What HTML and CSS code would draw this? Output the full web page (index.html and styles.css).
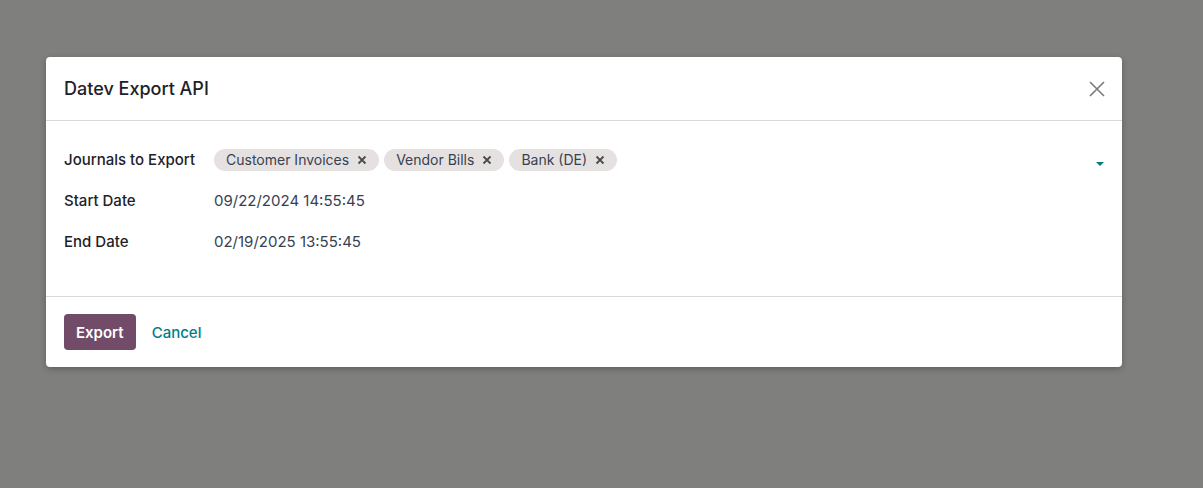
FILE: index.html
```html
<!DOCTYPE html>
<html>
<head>
<meta charset="utf-8">
<link rel="stylesheet" href="styles.css">
</head>
<body>
<div class="backdrop">
  <div class="modal">
    <div class="modal-header">
      <h4 class="modal-title">Datev Export API</h4>
      <button class="close" aria-label="Close">
        <svg width="18" height="18" viewBox="0 0 18 18"><path d="M2 2L16 16M16 2L2 16" stroke="#7a7a7a" stroke-width="1.6" fill="none"/></svg>
      </button>
    </div>
    <div class="modal-body">
      <div class="row">
        <div class="label">Journals to Export</div>
        <div class="value tags">
          <span class="tag">Customer Invoices <svg class="x" width="10" height="10" viewBox="0 0 10 10"><path d="M1.5 1.5L8.5 8.5M8.5 1.5L1.5 8.5" stroke="#4b4b4b" stroke-width="1.8" fill="none"/></svg></span>
          <span class="tag">Vendor Bills <svg class="x" width="10" height="10" viewBox="0 0 10 10"><path d="M1.5 1.5L8.5 8.5M8.5 1.5L1.5 8.5" stroke="#4b4b4b" stroke-width="1.8" fill="none"/></svg></span>
          <span class="tag">Bank (DE) <svg class="x" width="10" height="10" viewBox="0 0 10 10"><path d="M1.5 1.5L8.5 8.5M8.5 1.5L1.5 8.5" stroke="#4b4b4b" stroke-width="1.8" fill="none"/></svg></span>
          <span class="caret"></span>
        </div>
      </div>
      <div class="row">
        <div class="label">Start Date</div>
        <div class="value">09/22/2024 14:55:45</div>
      </div>
      <div class="row">
        <div class="label">End Date</div>
        <div class="value">02/19/2025 13:55:45</div>
      </div>
    </div>
    <div class="modal-footer">
      <button class="btn-primary">Export</button>
      <button class="btn-link">Cancel</button>
    </div>
  </div>
</div>
</body>
</html>
```

FILE: styles.css
```css
html, body {
  margin: 0;
  padding: 0;
  height: 100%;
}
body {
  background: #7f807e;
  font-family: Inter, "Noto Sans", sans-serif;
  color: #1f2129;
}
.backdrop {
  padding: 57px 81px 0 46px;
}
.modal {
  background: #fff;
  border-radius: 4px;
  box-shadow: 0 2px 6px rgba(0,0,0,0.25);
  width: 1076px;
}
.modal-header {
  height: 63px;
  border-bottom: 1px solid #d8dadd;
  display: flex;
  align-items: center;
  justify-content: space-between;
  padding: 0 16px 0 18px;
}
.modal-title {
  margin: 0;
  font-size: 18px;
  font-weight: 500;
  color: #1f2129;
}
.close {
  background: none;
  border: 0;
  padding: 0;
  display: flex;
  cursor: pointer;
}
.modal-body {
  padding: 18px 18px 34px 18px;
}
.row {
  display: flex;
  align-items: center;
  height: 41px;
}
.label {
  width: 150px;
  font-size: 15px;
  font-weight: 500;
  color: #1f2129;
}
.value {
  font-size: 15px;
  color: #374151;
  flex: 1;
}
.tags {
  display: flex;
  align-items: center;
  gap: 5px;
  position: relative;
}
.tag {
  display: inline-flex;
  align-items: center;
  height: 22px;
  padding: 0 12px;
  border-radius: 11px;
  background: #e6e1e1;
  color: #374151;
  font-size: 14px;
}
.x {
  margin-left: 8px;
}
.caret {
  position: absolute;
  right: 0;
  top: 50%;
  margin-top: 2px;
  width: 0;
  height: 0;
  border-left: 4px solid transparent;
  border-right: 4px solid transparent;
  border-top: 4px solid #017e84;
}
.modal-footer {
  border-top: 1px solid #d8dadd;
  padding: 17px 18px 17px 18px;
  display: flex;
  align-items: center;
  gap: 4px;
}
.btn-primary {
  background: #714b67;
  color: #fff;
  border: 0;
  border-radius: 4px;
  height: 36px;
  padding: 0 12px;
  font-family: inherit;
  font-size: 15px;
  font-weight: 600;
}
.btn-link {
  background: none;
  border: 0;
  color: #017e84;
  font-family: inherit;
  font-size: 15px;
  font-weight: 500;
  padding: 0 12px;
  height: 36px;
}
```
